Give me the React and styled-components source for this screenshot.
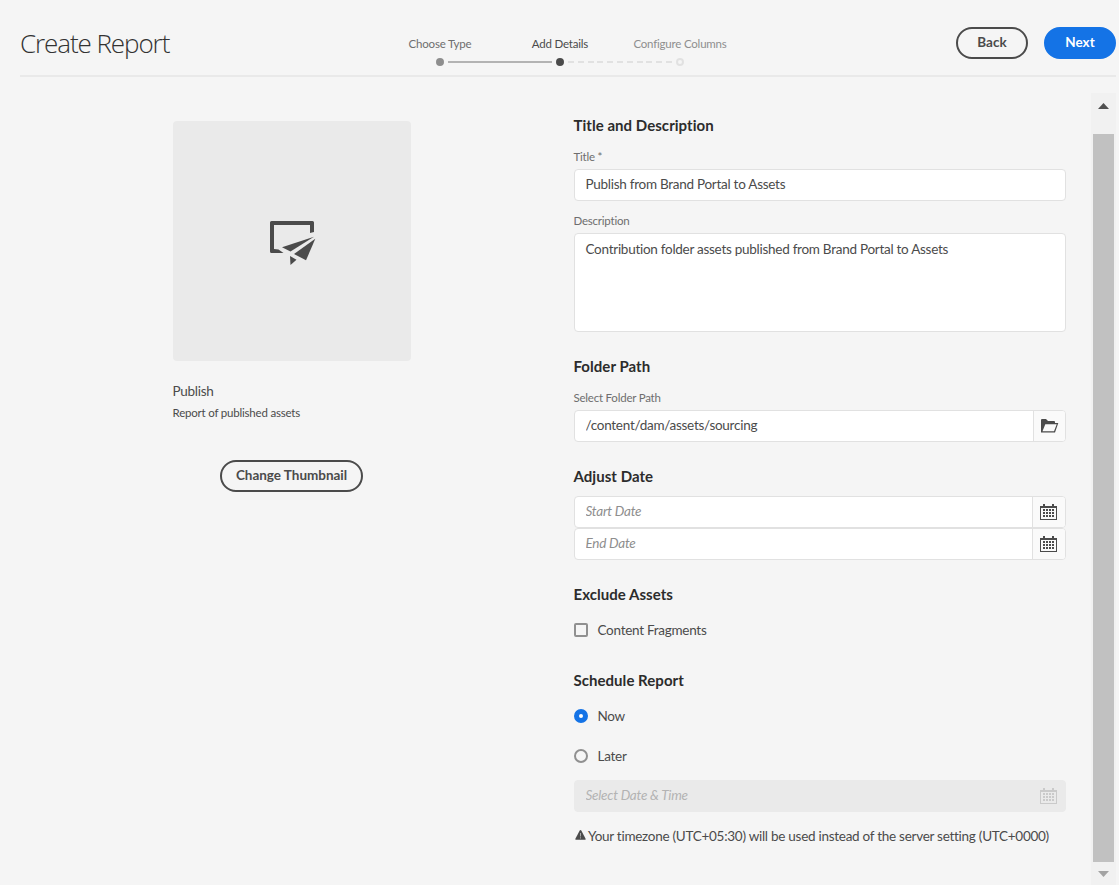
import React from "react";
import styled, { createGlobalStyle, css } from "styled-components";

const Global = createGlobalStyle`
  * { box-sizing: border-box; }
  body { margin: 0; background: #f5f5f5; }
  input, textarea, button { font-family: inherit; }
`;

const Page = styled.div`
  display: flex;
  flex-direction: column;
  width: 1119px;
  height: 885px;
  overflow: hidden;
  background: #f5f5f5;
  color: #4b4b4b;
  font-family: Lato, "Noto Sans", sans-serif;
  font-size: 13.5px;
  letter-spacing: -0.27px;
`;

const Header = styled.header`
  display: grid;
  grid-template-columns: 360px 360px 1fr;
  height: 77px;
  flex: none;
  margin: 0 3px 0 20px;
  border-bottom: 2px solid #e9e9e9;
`;

const PageTitle = styled.h1`
  margin: 25px 0 0;
  font-family: "Open Sans", sans-serif;
  font-size: 26px;
  font-weight: 300;
  line-height: 36px;
  letter-spacing: -1.08px;
  color: #323232;
`;

const Steps = styled.div`
  padding-top: 36px;
`;

const StepLabels = styled.div`
  display: grid;
  grid-template-columns: repeat(3, 1fr);
`;

const StepLabel = styled.div`
  text-align: center;
  font-size: 11.5px;
  line-height: 16px;
  letter-spacing: -0.2px;
  color: ${(p) => p.$color};
`;

const StepTrack = styled.div`
  display: flex;
  align-items: center;
  gap: 4px;
  padding: 6px 56px 0;
`;

const StepDot = styled.span`
  width: 8px;
  height: 8px;
  border-radius: 50%;
  background: ${(p) => p.$fill};
  border: 2px solid ${(p) => p.$ring || p.$fill};
`;

const StepLine = styled.span`
  flex: 1;
  height: 2px;
  background: ${(p) =>
    p.$dashed
      ? "repeating-linear-gradient(90deg, #e1e1e1 0 6px, transparent 6px 9.8px)"
      : "#b3b3b3"};
`;

const Actions = styled.div`
  display: flex;
  justify-content: flex-end;
  gap: 16px;
  padding-top: 27px;
`;

const Button = styled.button`
  width: ${(p) => p.$width || 72}px;
  height: 32px;
  padding: 0 0 2px;
  border-radius: 16px;
  border: 2px solid ${(p) => (p.$primary ? "#1473e6" : "#4b4b4b")};
  background: ${(p) => (p.$primary ? "#1473e6" : "transparent")};
  color: ${(p) => (p.$primary ? "#fff" : "#4b4b4b")};
  font-size: 13.5px;
  font-weight: 700;
  letter-spacing: -0.02px;
`;

const Body = styled.main`
  display: flex;
  flex: 1;
  min-height: 0;
`;

const Preview = styled.section`
  width: 401px;
  margin: 44px 0 0 173px;
`;

const Thumbnail = styled.div`
  display: flex;
  align-items: center;
  justify-content: center;
  width: 238px;
  height: 240px;
  padding: 5px 0 0 2px;
  border-radius: 4px;
  background: #eaeaea;
`;

const PreviewName = styled.div`
  margin: 20px 0 0 -0.5px;
  line-height: 20px;
`;

const PreviewNote = styled.div`
  margin: 3px 0 0 -0.5px;
  font-size: 11.5px;
  line-height: 18px;
  letter-spacing: -0.2px;
`;

const PreviewAction = styled.div`
  width: 237px;
  margin-top: 38px;
  display: flex;
  justify-content: center;
`;

const Form = styled.form`
  width: 492px;
  padding-top: 38px;
`;

const Heading = styled.h2`
  margin: ${(p) => p.$top || 0}px 0 0 -0.5px;
  font-size: 15px;
  font-weight: 700;
  line-height: 20px;
  color: #2c2c2c;
  letter-spacing: 0.04px;
`;

const Label = styled.label`
  display: block;
  margin: ${(p) => p.$top || 14}px 0 4px -0.5px;
  font-size: 11.5px;
  line-height: 16px;
  letter-spacing: -0.22px;
  color: #6e6e6e;
`;

const control = css`
  width: 100%;
  border: 1px solid #e1e1e1;
  border-radius: 4px;
  background: #fff;
  color: #4b4b4b;
  font-size: 13.5px;
  letter-spacing: -0.27px;
  outline: none;
`;

const TextInput = styled.input`
  ${control}
  display: block;
  height: 32px;
  padding: 0 10.5px 2px;
`;

const TextArea = styled.textarea`
  ${control}
  display: block;
  height: 99px;
  padding: 5px 10.5px;
  line-height: 20px;
  resize: none;
`;

const Group = styled.div`
  ${control}
  display: flex;
  height: 32px;
  margin-top: ${(p) => p.$top || 0}px;
  overflow: hidden;
  ${(p) => p.$disabled && "background: #eaeaea; border-color: #eaeaea;"}
`;

const GroupInput = styled.input`
  flex: 1;
  min-width: 0;
  border: 0;
  padding: 0 10.5px 2px;
  background: transparent;
  color: inherit;
  font-size: 13.5px;
  letter-spacing: inherit;
  outline: none;
  &::placeholder {
    color: ${(p) => (p.disabled ? "#b3b3b3" : "#8e8e8e")};
    font-style: italic;
    letter-spacing: -0.24px;
    opacity: 1;
  }
`;

const GroupButton = styled.span`
  display: flex;
  align-items: center;
  justify-content: center;
  width: ${(p) => p.$width || 33}px;
  padding-right: ${(p) => (p.$width ? 0 : 1)}px;
  padding-left: ${(p) => (p.$width ? 1 : 0)}px;
  border-left: 1px solid ${(p) => (p.$disabled ? "transparent" : "#e1e1e1")};
  background: ${(p) => (p.$disabled ? "transparent" : "#fafafa")};
  color: ${(p) => (p.$disabled ? "#cacaca" : "#4b4b4b")};
`;

const Option = styled.div`
  display: flex;
  align-items: center;
  gap: 9.5px;
  height: 20px;
  margin-top: ${(p) => p.$top}px;
`;

const CheckMark = styled.span`
  width: 14px;
  height: 14px;
  border: 2px solid #909090;
  border-radius: 2px;
`;

const RadioMark = styled.span`
  width: 14px;
  height: 14px;
  border-radius: 50%;
  border: ${(p) => (p.$on ? "5px solid #1473e6" : "2px solid #909090")};
  background: ${(p) => (p.$on ? "#fff" : "transparent")};
`;

const Note = styled.p`
  display: flex;
  align-items: center;
  gap: 2.5px;
  margin: 14px 0 0 0.5px;
  line-height: 20px;
  white-space: nowrap;
  svg {
    flex: none;
    margin-bottom: 2px;
  }
`;

const Scrollbar = styled.div`
  display: flex;
  flex-direction: column;
  align-items: center;
  width: 25px;
  margin: 16px 3px 0 auto;
  background: #f1f1f1;
`;

const ScrollArrow = styled.div`
  display: flex;
  justify-content: center;
  align-items: flex-start;
  height: ${(p) => p.$height}px;
  padding-top: ${(p) => p.$pad}px;
  color: ${(p) => p.$color};
`;

const ScrollThumb = styled.div`
  width: 21px;
  height: 728px;
  background: #c1c1c1;
`;

const PublishIcon = () => (
  <svg width="46" height="45" viewBox="0 0 46 45" fill="#4b4b4b">
    <path d="M1.500 0H42.500Q44 0 44 1.500V11L40 12V4H4V28L8.500 28.500L13.500 32H1.500Q0 32 0 30.500V1.500Q0 0 1.500 0Z" />
    <path d="M12 26.300L44 15.800L20.500 30.500Z" />
    <path d="M45.300 17.800L24 33L36 39.300Z" />
    <path d="M20 35L26.500 38.700L20.500 44Z" />
  </svg>
);

const CalendarIcon = () => (
  <svg width="17" height="16" viewBox="0 0 17 16" fill="currentColor" shapeRendering="crispEdges">
    <path
      fillRule="evenodd"
      d="M0 2H3V0H5V2H12V0H14V2H17V16H0ZM1 4V15H16V4Z"
    />
    {[5, 8, 11].map((y) =>
      [3, 6, 9, 12].map((x) => <rect key={`${x}-${y}`} x={x} y={y} width="2" height="2" />)
    )}
  </svg>
);

const FolderIcon = () => (
  <svg width="18" height="14" viewBox="0 0 18 14" fill="currentColor">
    <path
      fillRule="evenodd"
      d="M0 1Q0 0 1 0H5L7 2H13Q14 2 14 3V4H17.300L14 13.500H0ZM4.300 5.200L1.500 12.300H13L15.700 5.200Z"
    />
  </svg>
);

const AlertIcon = () => (
  <svg width="11" height="10" viewBox="0 0 11 10">
    <path d="M4.700.6Q5.500-.4 6.300.6L10.600 8.800Q10.800 9.800 10 9.800H1Q.2 9.800.4 8.800Z" fill="#4b4b4b" />
    <path d="M5 3h1v3.500H5zM5 7.300h1v1.200H5z" fill="#a8a8a8" />
  </svg>
);

const Arrow = ({ down }) => (
  <svg width="11" height="6" viewBox="0 0 11 6" fill="currentColor">
    <path d={down ? "M0 0H11L5.500 6Z" : "M0 6H11L5.500 0Z"} />
  </svg>
);

export default function App() {
  return (
    <Page>
      <Global />
      <Header>
        <PageTitle>Create Report</PageTitle>
        <Steps>
          <StepLabels>
            <StepLabel $color="#6e6e6e">Choose Type</StepLabel>
            <StepLabel $color="#4b4b4b">Add Details</StepLabel>
            <StepLabel $color="#8e8e8e">Configure Columns</StepLabel>
          </StepLabels>
          <StepTrack>
            <StepDot $fill="#8e8e8e" />
            <StepLine />
            <StepDot $fill="#4b4b4b" />
            <StepLine $dashed />
            <StepDot $fill="#f5f5f5" $ring="#e1e1e1" />
          </StepTrack>
        </Steps>
        <Actions>
          <Button>Back</Button>
          <Button $primary>Next</Button>
        </Actions>
      </Header>
      <Body>
        <Preview>
          <Thumbnail>
            <PublishIcon />
          </Thumbnail>
          <PreviewName>Publish</PreviewName>
          <PreviewNote>Report of published assets</PreviewNote>
          <PreviewAction>
            <Button $width={143}>Change Thumbnail</Button>
          </PreviewAction>
        </Preview>
        <Form>
          <Heading>Title and Description</Heading>
          <Label>Title *</Label>
          <TextInput defaultValue="Publish from Brand Portal to Assets" />
          <Label $top={12}>Description</Label>
          <TextArea defaultValue="Contribution folder assets published from Brand Portal to Assets" />
          <Heading $top={24}>Folder Path</Heading>
          <Label>Select Folder Path</Label>
          <Group>
            <GroupInput defaultValue="/content/dam/assets/sourcing" />
            <GroupButton $width={32}>
              <FolderIcon />
            </GroupButton>
          </Group>
          <Heading $top={24}>Adjust Date</Heading>
          <Group $top={10}>
            <GroupInput placeholder="Start Date" />
            <GroupButton>
              <CalendarIcon />
            </GroupButton>
          </Group>
          <Group>
            <GroupInput placeholder="End Date" />
            <GroupButton>
              <CalendarIcon />
            </GroupButton>
          </Group>
          <Heading $top={24}>Exclude Assets</Heading>
          <Option $top={16}>
            <CheckMark />
            Content Fragments
          </Option>
          <Heading $top={30}>Schedule Report</Heading>
          <Option $top={16}>
            <RadioMark $on />
            Now
          </Option>
          <Option $top={20}>
            <RadioMark />
            Later
          </Option>
          <Group $top={14} $disabled>
            <GroupInput placeholder="Select Date &amp; Time" disabled />
            <GroupButton $disabled>
              <CalendarIcon />
            </GroupButton>
          </Group>
          <Note>
            <AlertIcon />
            Your timezone (UTC+05:30) will be used instead of the server setting (UTC+0000)
          </Note>
        </Form>
        <Scrollbar>
          <ScrollArrow $height={41} $pad={10} $color="#505050">
            <Arrow />
          </ScrollArrow>
          <ScrollThumb />
          <ScrollArrow $height={23} $pad={9} $color="#a3a3a3">
            <Arrow down />
          </ScrollArrow>
        </Scrollbar>
      </Body>
    </Page>
  );
}
